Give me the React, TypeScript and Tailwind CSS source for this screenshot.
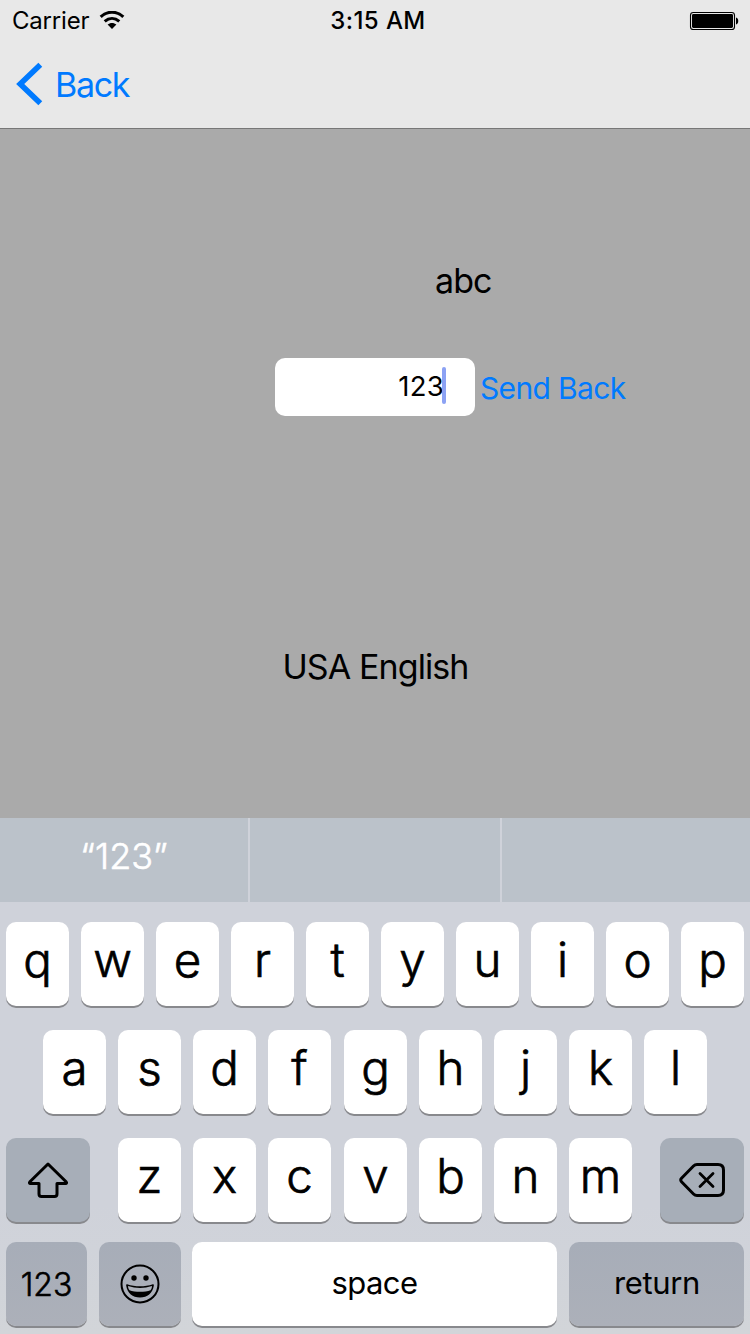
import type { ReactNode } from "react";

type KeyProps = { children: ReactNode; className?: string };

function LetterKey({ children, className = "" }: KeyProps) {
  return (
    <button
      className={`flex h-[84px] w-[63px] shrink-0 items-center justify-center rounded-[10px] bg-white pb-2 text-[47.5px] leading-none font-light shadow-[0_2px_0_#88898d] [-webkit-text-stroke:0.7px_#000] ${className}`}
    >
      {children}
    </button>
  );
}

function ActionKey({ children, className = "" }: KeyProps) {
  return (
    <button
      className={`flex h-[84px] shrink-0 items-center justify-center rounded-[10px] shadow-[0_2px_0_#88898d] ${className}`}
    >
      {children}
    </button>
  );
}

function StatusBar() {
  return (
    <div className="grid h-10 grid-cols-3 items-center pt-px pr-[11px] pl-3 text-2xl leading-none">
      <div className="flex items-center gap-[10px]">
        <span className="tracking-[-0.2px]">Carrier</span>
        <svg width="26" height="18" viewBox="0 0 26 18" fill="none" className="-mt-[2px]">
          <path d="M1.700 5.800C8.200-.3 17.800-.3 24.300 5.800" stroke="#000" strokeWidth="3.100" />
          <path d="M5.700 10.400c4.400-3.900 10.200-3.900 14.600 0" stroke="#000" strokeWidth="3" />
          <path d="M8.600 13.600c2.600-2.300 6.200-2.300 8.800 0L13 18z" fill="#000" />
        </svg>
      </div>
      <span className="pl-[5px] text-center font-medium tracking-[0.4px]">3:15 AM</span>
      <svg width="50" height="20" viewBox="0 0 50 20" className="justify-self-end">
        <rect x="1.500" y="1.500" width="44" height="17" rx="2.800" fill="none" stroke="#000" strokeWidth="1.100" />
        <rect x="3" y="3" width="41" height="14" rx="1.400" />
        <path d="M47 6.500c3 .5 3 6.500 0 7z" />
      </svg>
    </div>
  );
}

function Keyboard() {
  return (
    <section className="flex h-[516px] flex-col bg-linear-to-b from-[#cfd2da] from-75% to-[#d2d5d9]">
      <div className="flex h-[84px]">
        <div className="flex w-[250px] items-center justify-center border-r-2 border-[#cfd2da] bg-[#bbc2ca] pb-2 text-[36px] leading-none font-light text-white [-webkit-text-stroke:0.6px_#fff]">
          “123”
        </div>
        <div className="w-[252px] border-r-2 border-[#cfd2da] bg-[#bbc2ca]" />
        <div className="flex-1 bg-[#bbc2ca]" />
      </div>
      <div className="flex flex-col gap-6 px-1.5 pt-5">
        <div className="flex gap-3">
          {"qwertyuiop".split("").map((c) => (
            <LetterKey key={c}>{c}</LetterKey>
          ))}
        </div>
        <div className="flex gap-3 pl-[37px]">
          {"asdfghjkl".split("").map((c) => (
            <LetterKey key={c} className={c === "g" ? "ml-px" : ""}>{c}</LetterKey>
          ))}
        </div>
        <div className="flex justify-between">
          <ActionKey className="w-[84px] bg-[#a7aeb8]">
            <svg width="42" height="38" viewBox="0 0 42 38" fill="none" stroke="#000" strokeWidth="3" strokeLinejoin="round">
              <path d="M21 3 2.900 20.700C2 21.600 2.400 22.500 3.500 22.500H12V33Q12 35.500 14.500 35.500H27.500Q30 35.500 30 33V22.500H38.500C39.600 22.500 40 21.600 39.100 20.700Z" />
            </svg>
          </ActionKey>
          <div className="flex gap-3">
            {"zxcvbnm".split("").map((c) => (
              <LetterKey key={c} className={c === "v" ? "ml-px" : ""}>{c}</LetterKey>
            ))}
          </div>
          <ActionKey className="w-[84px] bg-[#a7aeb8]">
            <svg width="48" height="36" viewBox="0 0 48 36" fill="none" stroke="#000" strokeWidth="3" strokeLinejoin="round" strokeLinecap="round">
              <path d="M19 2.500H40Q45.500 2.500 45.500 8V28Q45.500 33.500 40 33.500H19Q17 33.500 15.500 32L3.500 19.700Q2 18 3.500 16.300L15.500 4Q17 2.500 19 2.500Z" />
              <path d="m22 11.500 13 13m0-13-13 13" strokeWidth="2.800" />
            </svg>
          </ActionKey>
        </div>
      </div>
      <div className="mt-5 flex px-1.5 text-[31px] leading-none">
        <ActionKey className="w-[81px] bg-linear-to-b from-[#a7adb8] to-[#acb0b9] pt-0.5 text-[32px] font-light [-webkit-text-stroke:0.6px_#000]">123</ActionKey>
        <ActionKey className="ml-3 w-[82px] bg-linear-to-b from-[#a7adb8] to-[#acb0b9]">
          <svg width="40" height="40" viewBox="0 0 40 40" className="-mt-px -ml-px">
            <circle cx="20" cy="20" r="18.500" fill="none" stroke="#000" strokeWidth="2" />
            <circle cx="14" cy="14" r="2.700" />
            <circle cx="26" cy="14" r="2.700" />
            <path d="M7.200 20.200C15 23 25 23 32.800 20.200C33.600 20 34 20.700 33.800 21.800C32.500 29.500 27.500 33.500 20 33.500S7.500 29.500 6.200 21.800C6 20.700 6.400 20 7.200 20.200Z" />
            <path d="M8 22C16 24.600 24 24.600 32 22C32 23.500 31.500 25 30.500 26.200C25 28.200 15 28.200 9.500 26.200C8.500 25 8 23.500 8 22Z" fill="#acb1ba" />
          </svg>
        </ActionKey>
        <ActionKey className="ml-[11px] w-[365px] bg-white pb-1 tracking-[-0.6px]">space</ActionKey>
        <ActionKey className="ml-3 w-[175px] bg-linear-to-b from-[#a7adb8] to-[#acb0b9] pb-1 pl-px tracking-[-0.400px]">return</ActionKey>
      </div>
    </section>
  );
}

export default function App() {
  return (
    <div className="flex h-[1334px] w-[750px] flex-col overflow-hidden bg-[#aaaaaa] font-['Inter','Liberation_Sans',sans-serif] text-black">
      <header className="h-[129px] shrink-0 border-b border-[#777777] bg-[#e8e8e8]">
        <StatusBar />
        <button className="flex h-[88px] items-center gap-[11px] pl-4 text-[34px] leading-none tracking-[-1.300px] text-[#007aff]">
          <svg width="28" height="44" viewBox="0 0 28 44" fill="none">
            <path d="M24.300 2.700 4.200 22l20.100 19.300" stroke="#007aff" strokeWidth="5.600" />
          </svg>
          <span className="pt-px">Back</span>
        </button>
      </header>
      <main className="flex flex-1 flex-col">
        <p className="mt-[132px] ml-[435px] text-[34px] leading-10 tracking-[-0.900px]">abc</p>
        <div className="mt-[57px] ml-[275px] flex h-[58px] items-center">
          <div className="flex h-[58px] w-[200px] items-center justify-end rounded-[10px] bg-white pr-[29px] pb-1 text-[27.500px] leading-none">
            <span className="-mr-0.5 pt-[3px] tracking-[0.300px]">123</span>
            <span className="h-[37px] w-1 rounded-sm bg-[#8ca2f4]" />
          </div>
          <button className="ml-[5px] pt-px text-[30px] leading-none tracking-[-0.650px] text-[#007aff]">Send Back</button>
        </div>
        <p className="mt-[231px] pl-px text-center text-[34px] leading-10 tracking-[-0.900px]">USA English</p>
      </main>
      <Keyboard />
    </div>
  );
}
